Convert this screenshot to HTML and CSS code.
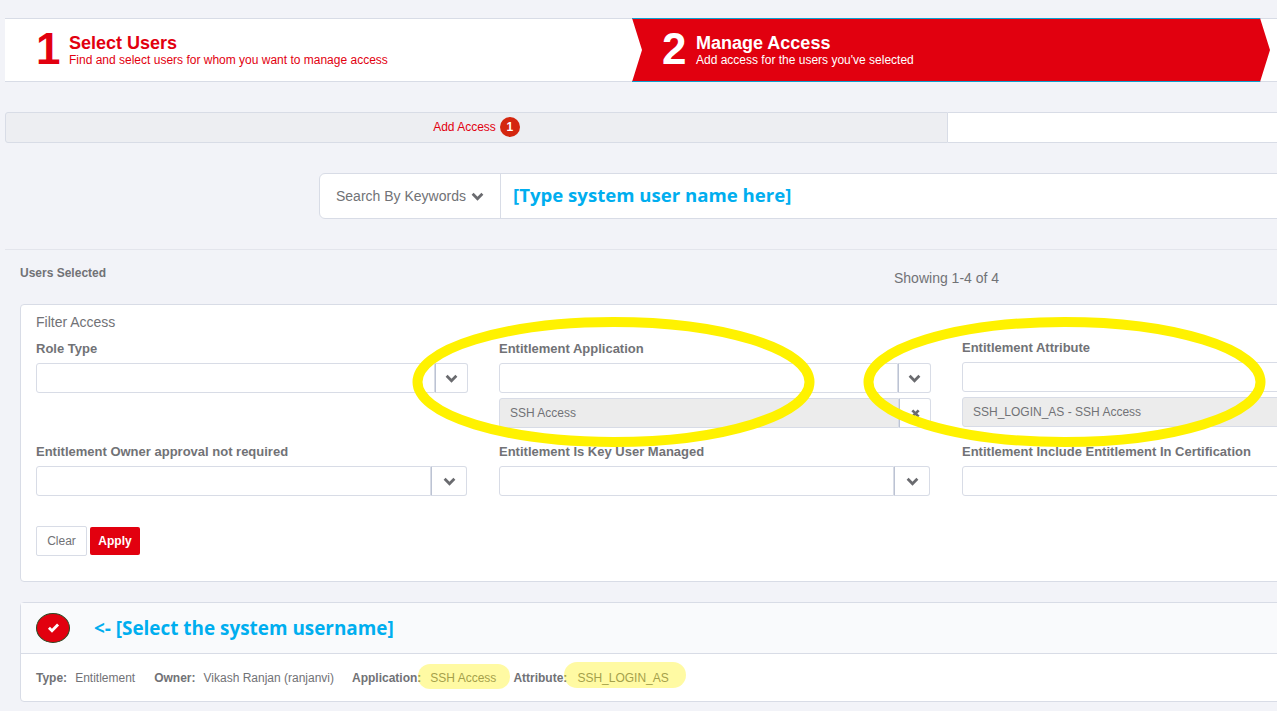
FILE: index.html
```html
<!Doctype html>
<html>
<head>
    <title>Manage Access</title>
    <link rel="stylesheet" href="styles.css">
</head>
<body>
<div class="page">

    <div class="steps">
        <div class="step step-one">
            <span class="step-num">1</span>
            <div>
                <div class="step-title">Select Users</div>
                <div class="step-sub">Find and select users for whom you want to manage access</div>
            </div>
        </div>
        <div class="step step-two">
            <span class="step-num">2</span>
            <div>
                <div class="step-title">Manage Access</div>
                <div class="step-sub">Add access for the users you've selected</div>
            </div>
        </div>
    </div>

    <div class="tabs">
        <div class="tab tab-active">Add Access <span class="badge">1</span></div>
        <div class="tab"></div>
    </div>

    <div class="search">
        <div class="search-by">Search By Keywords
            <svg class="chev" viewBox="0 0 12 8"><path d="M1.5 1.5 6 6l4.5-4.5"/></svg>
        </div>
        <div class="search-note">[Type system user name here]</div>
    </div>

    <div class="divider"></div>

    <div class="users-row">
        <div class="users-title">Users Selected</div>
        <div class="showing">Showing 1-4 of 4</div>
    </div>

    <div class="filter">
        <div class="filter-title">Filter Access</div>
        <div class="filter-grid">
            <div class="field">
                <label>Role Type</label>
                <div class="select">
                    <div class="select-box"></div>
                    <div class="select-btn"><svg class="chev" viewBox="0 0 12 8"><path d="M1.5 1.5 6 6l4.5-4.5"/></svg></div>
                </div>
            </div>
            <div class="field">
                <label>Entitlement Application</label>
                <div class="select">
                    <div class="select-box"></div>
                    <div class="select-btn"><svg class="chev" viewBox="0 0 12 8"><path d="M1.5 1.5 6 6l4.5-4.5"/></svg></div>
                </div>
                <div class="select chip">
                    <div class="select-box">SSH Access</div>
                    <div class="select-btn"><svg class="cross" viewBox="0 0 8 8"><path d="M1.2 1.2l5.6 5.6M6.8 1.2 1.2 6.8"/></svg></div>
                </div>
            </div>
            <div class="field field-up">
                <label>Entitlement Attribute</label>
                <div class="select">
                    <div class="select-box"></div>
                </div>
                <div class="select chip">
                    <div class="select-box">SSH_LOGIN_AS - SSH Access</div>
                </div>
            </div>
            <div class="field">
                <label>Entitlement Owner approval not required</label>
                <div class="select short">
                    <div class="select-box"></div>
                    <div class="select-btn"><svg class="chev" viewBox="0 0 12 8"><path d="M1.5 1.5 6 6l4.5-4.5"/></svg></div>
                </div>
            </div>
            <div class="field">
                <label>Entitlement Is Key User Managed</label>
                <div class="select short">
                    <div class="select-box"></div>
                    <div class="select-btn"><svg class="chev" viewBox="0 0 12 8"><path d="M1.5 1.5 6 6l4.5-4.5"/></svg></div>
                </div>
            </div>
            <div class="field">
                <label>Entitlement Include Entitlement In Certification</label>
                <div class="select">
                    <div class="select-box"></div>
                </div>
            </div>
        </div>
        <div class="filter-actions">
            <button class="btn btn-clear">Clear</button>
            <button class="btn btn-apply">Apply</button>
        </div>
    </div>

    <div class="result">
        <div class="result-head">
            <span class="pick"><svg viewBox="0 0 12 10"><path d="M1.8 5.2 4.6 8l5.6-5.8"/></svg></span>
            <span class="result-note">&lt;- [Select the system username]</span>
        </div>
        <div class="result-meta">
            <b>Type:</b><span class="val val-type">Entitlement</span>
            <b>Owner:</b><span class="val val-owner">Vikash Ranjan (ranjanvi)</span>
            <b>Application:</b><span class="val val-app">SSH Access</span>
            <b>Attribute:</b><span class="val val-attr">SSH_LOGIN_AS</span>
        </div>
    </div>

    <!-- marker drawn on top of the screenshot -->
    <svg class="marks" width="1277" height="711" viewBox="0 0 1277 711">
        <ellipse class="ring" cx="613.5" cy="382" rx="196" ry="60"/>
        <ellipse class="ring" cx="1064.5" cy="382" rx="196" ry="60"/>
        <rect class="hl" x="418" y="664" width="92" height="25" rx="12"/>
        <rect class="hl" x="564" y="662" width="122" height="26" rx="13"/>
    </svg>
</div>
</body>
</html>
```
FILE: styles.css
```css
* {
    box-sizing: border-box;
}

html, body {
    margin: 0;
    height: 711px;
    overflow: hidden;
}

body {
    background-color: #f2f3f8;
    color: #717276;
    font-family: "Liberation Sans", Arial, sans-serif;
    font-size: 12px;
}

.page {
    position: relative;
    width: 1420px;
    height: 711px;
    padding: 18px 0 0 5px;
}

/* steps */
.steps {
    display: flex;
    height: 64px;
    background-color: #fff;
    border-top: 1px solid #d8dce6;
    border-bottom: 1px solid #d8dce6;
}

.step {
    display: flex;
    align-items: center;
    height: 64px;
    margin-top: -1px;
}

.step-one {
    width: 627px;
    padding-left: 31px;
    color: #e2000f;
}

.step-two {
    width: 638px;
    padding-left: 30px;
    color: #fff;
    background-color: #e1000f;
    border-top: 1px solid #0d9fd0;
    border-bottom: 1px solid #0d9fd0;
    clip-path: polygon(0 0, 628px 0, 638px 50%, 628px 100%, 0 100%, 10px 50%);
}

.step-num {
    width: 33px;
    margin-top: -2px;
    font-size: 44px;
    font-weight: bold;
    line-height: 44px;
}

.step-two .step-num {
    width: 34px;
}

.step-title {
    font-size: 18px;
    font-weight: bold;
    line-height: 18px;
}

.step-sub {
    margin: 1px 0 -1px;
    font-size: 12px;
    line-height: 14px;
}

/* tabs */
.tabs {
    display: flex;
    margin-top: 30px;
    height: 31px;
}

.tab {
    flex: 1;
    background-color: #fff;
    border: 1px solid #d8dce6;
    border-left: 0;
}

.tab-active {
    flex: 0 0 943px;
    display: flex;
    align-items: center;
    justify-content: center;
    gap: 4px;
    padding-bottom: 2px;
    color: #e2000f;
    background-color: #edeef2;
    border: 1px solid #d8dce6;
    border-radius: 3px 0 0 3px;
}

.badge {
    width: 20px;
    height: 20px;
    border-radius: 50%;
    background-color: #d4260f;
    color: #fff;
    font-weight: bold;
    text-align: center;
    line-height: 20px;
}

/* search */
.search {
    display: flex;
    width: 1000px;
    height: 46px;
    margin: 30px 0 0 314px;
    background-color: #fff;
    border: 1px solid #d8dce6;
    border-radius: 6px 0 0 6px;
}

.search-by {
    display: flex;
    align-items: center;
    gap: 5px;
    width: 181px;
    padding-left: 16px;
    font-size: 14px;
    border-right: 1px solid #d8dce6;
}

.search-note {
    padding-left: 12px;
    color: #00aeef;
    font-family: "Open Sans", sans-serif;
    font-size: 18.6px;
    font-weight: bold;
    line-height: 41px;
}

.chev {
    width: 13px;
    height: 9px;
    fill: none;
    stroke: #6a6b6f;
    stroke-width: 2.6;
}

.cross {
    width: 9px;
    height: 9px;
    fill: none;
    stroke: #6a6b6f;
    stroke-width: 2.4;
}

.divider {
    margin-top: 30px;
    border-top: 1px solid #e3e5ec;
}

/* users */
.users-row {
    display: flex;
    height: 54px;
    padding-left: 15px;
}

.users-title {
    width: 874px;
    padding-top: 16px;
    font-weight: bold;
}

.showing {
    padding-top: 20px;
    font-size: 14px;
}

/* filter */
.filter {
    width: 1400px;
    height: 278px;
    margin-left: 15px;
    padding: 9px 15px;
    background-color: #fff;
    border: 1px solid #d8dce6;
    border-radius: 4px;
}

.filter-title {
    font-size: 14px;
    line-height: 16px;
}

.filter-grid {
    display: grid;
    grid-template-columns: 432px 432px 432px;
    grid-template-rows: 103px 60px;
    column-gap: 31px;
    margin-top: 10px;
}

.field label {
    display: block;
    height: 20px;
    margin-bottom: 3px;
    font-size: 13px;
    font-weight: bold;
    line-height: 17px;
}

.field-up {
    margin-top: -1px;
}

.select {
    display: flex;
    height: 30px;
}

.select-box {
    flex: 1;
    background-color: #fff;
    border: 1px solid #d8dce6;
    border-radius: 3px 0 0 3px;
}

.select-btn {
    display: flex;
    align-items: center;
    justify-content: center;
    width: 33px;
    background-color: #fff;
    border: 1px solid #d8dce6;
    border-left: 1px solid #bcc3d3;
    border-radius: 0 3px 3px 0;
}

.short {
    width: 431px;
}

.short .select-btn {
    width: 36px;
}

.chip {
    margin-top: 5px;
}

.chip .select-box {
    padding-left: 10px;
    background-color: #ececec;
    line-height: 28px;
}

.chip .select-btn {
    width: 32px;
}

.filter-actions {
    display: flex;
    align-items: center;
    gap: 3px;
    margin-top: 23px;
}

.btn {
    height: 28px;
    padding: 0;
    font-family: inherit;
    font-size: 12px;
    border-radius: 2px;
}

.btn-clear {
    width: 51px;
    height: 30px;
    color: #717276;
    background-color: #fff;
    border: 1px solid #d8dce6;
}

.btn-apply {
    width: 50px;
    color: #fff;
    font-weight: bold;
    background-color: #e2000f;
    border: 0;
}

/* result row */
.result {
    width: 1400px;
    height: 100px;
    margin: 20px 0 0 15px;
    background-color: #fff;
    border: 1px solid #d8dce6;
    border-radius: 4px;
}

.result-head {
    display: flex;
    align-items: center;
    gap: 24px;
    height: 51px;
    padding-left: 15px;
    background-color: #f9fafc;
    border-bottom: 1px solid #d8dce6;
}

.pick {
    display: flex;
    align-items: center;
    justify-content: center;
    width: 34px;
    height: 30px;
    border-radius: 50%;
    background-color: #e2000f;
    border: 1px solid #2c4a24;
}

.pick svg {
    width: 13px;
    height: 11px;
    margin-top: -2px;
    fill: none;
    stroke: #fff;
    stroke-width: 2.6;
}

.result-note {
    color: #00aeef;
    font-family: "Open Sans", sans-serif;
    font-size: 18.9px;
    font-weight: bold;
}

.result-meta {
    display: flex;
    align-items: center;
    height: 47px;
    padding-left: 15px;
}

.val {
    margin-left: 8px;
}

.val-type {
    margin-right: 19px;
}

.val-owner {
    margin-right: 18px;
}

.val-app {
    margin-left: 9px;
    margin-right: 17px;
}

.val-attr {
    margin-left: 10px;
}

/* marker */
.marks {
    position: absolute;
    top: 0;
    left: 0;
    pointer-events: none;
}

.ring {
    fill: none;
    stroke: #fff200;
    stroke-width: 10;
}

.hl {
    fill: #fff200;
    opacity: 0.36;
}
```
